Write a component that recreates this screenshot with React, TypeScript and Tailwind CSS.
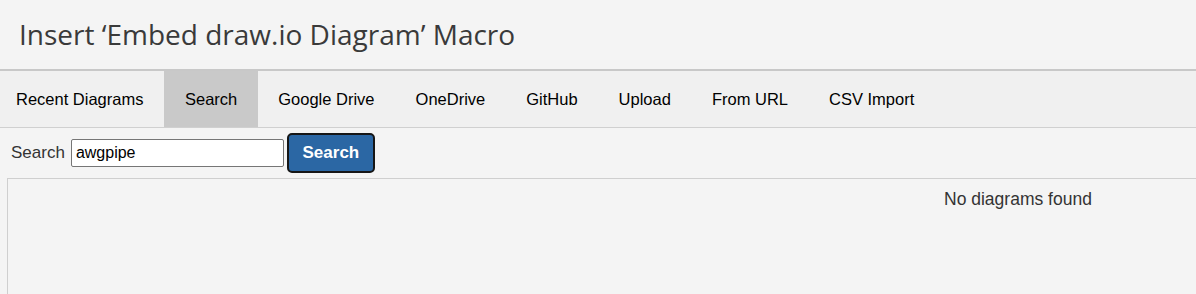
import React from "react";

const tabs = ["Recent Diagrams", "Search", "Google Drive", "OneDrive", "GitHub", "Upload", "From URL", "CSV Import"];

export default function App() {
  return (
    <div className="w-[1196px] h-[294px] overflow-hidden bg-[#f4f4f4]" style={{ fontFamily: "'Liberation Sans', Arial, sans-serif" }}>
      <div className="h-[71px] pl-[19px] flex items-center border-b-2 border-[#c8c8c8] bg-[#f4f4f4]">
        <h1 className="text-[28px] text-[#3a3a3a] leading-none pb-[2px]" style={{ fontFamily: "'Open Sans', 'Noto Sans', sans-serif", fontWeight: 400 }}>
          Insert ‘Embed draw.io Diagram’ Macro
        </h1>
      </div>
      <div className="flex h-[57px] bg-[#f0f0f0] border-b border-[#d0d0d0]">
        {tabs.map((t, i) => (
          <div
            key={t}
            className={`flex items-center text-[16.5px] text-black ${i === 0 ? "pl-4 pr-[21px]" : "px-[20.5px]"} ${t === "Search" ? "bg-[#c9c9c9]" : ""}`}
          >
            {t}
          </div>
        ))}
      </div>
      <div className="flex items-center pt-[5px] pl-[11px]">
        <span className="text-[17px] text-[#333333]">Search</span>
        <input
          readOnly
          value="awgpipe"
          className="ml-[6px] w-[213px] h-[28px] bg-white border border-[#767676] rounded-[2px] px-[4px] text-[16px] text-black outline-none"
        />
        <button className="ml-[3px] w-[88px] h-[40px] bg-[#2b67a4] border-2 border-[#161616] rounded-[5px] text-white font-bold text-[17px]">
          Search
        </button>
      </div>
      <div className="mt-[5px] ml-[7px] h-[200px] border-l border-t border-[#cfcfcf] pt-[7px] pl-[936px]">
        <span className="text-[17.5px] text-[#333333]">No diagrams found</span>
      </div>
    </div>
  );
}
